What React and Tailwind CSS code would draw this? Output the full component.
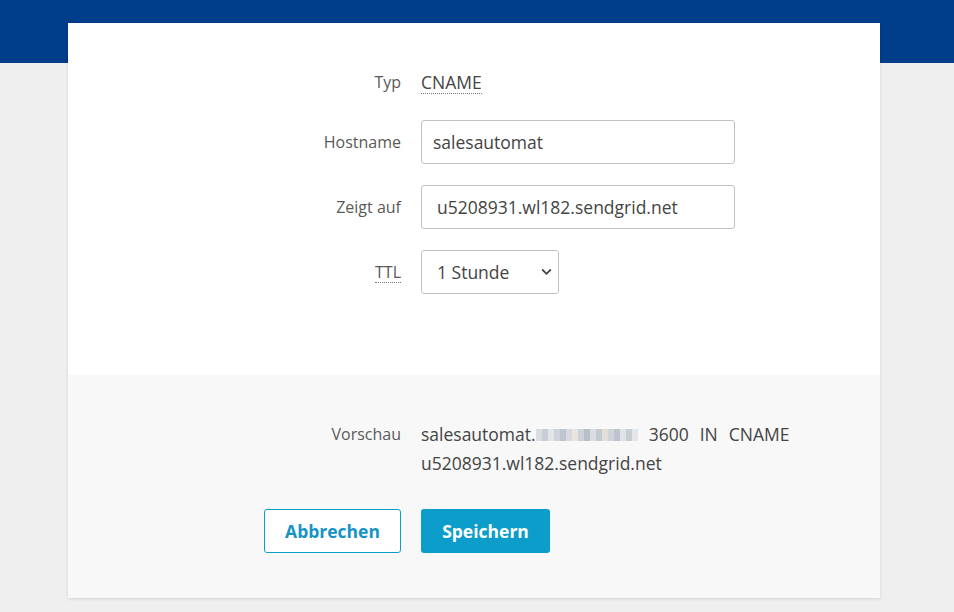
import React from "react";

const font = { fontFamily: '"Open Sans", "Noto Sans", sans-serif' };

function Blur() {
  const cells = [
    "#d9dde3", "#c9ced6", "#e3e5e8", "#cfd3da", "#bfc5ce", "#d6d9de", "#e8e4de", "#cdd2d9",
    "#b9c0ca", "#dadde2", "#c4cad3", "#e2dfd9", "#d0d4da", "#bcc3cc", "#dfe2e6", "#c8cdd5", "#e4e6e9",
  ];
  return (
    <span className="inline-flex h-[12px] w-[102px] items-stretch overflow-hidden blur-[0.6px]">
      {cells.map((c, i) => (
        <span key={i} className="flex-1" style={{ backgroundColor: c }} />
      ))}
    </span>
  );
}

export default function App() {
  return (
    <div className="min-h-[612px] w-full bg-[#efefef]" style={font}>
      <div className="h-[63px] w-full bg-[#003d8b]" />
      <div className="relative -mt-[40px] ml-[68px] w-[812px] bg-white shadow-[0_1px_3px_rgba(0,0,0,0.12)]">
        <div className="grid grid-cols-[333px_314px] gap-x-5 pt-[37px] pb-[81px]">
          <div className="flex h-[44px] items-center justify-end text-[16px] text-[#595959]">Typ</div>
          <div className="flex h-[44px] items-center">
            <span className="border-b border-dotted border-[#777] text-[17.5px] leading-[22px] text-[#444]">CNAME</span>
          </div>

          <div className="mt-[16px] flex h-[44px] items-center justify-end text-[16px] text-[#595959]">Hostname</div>
          <div className="mt-[16px]">
            <input
              readOnly
              value="salesautomat"
              className="h-[44px] w-[314px] rounded-[3px] border border-[#c2c2c2] bg-white px-[11px] text-[17.5px] text-[#444] outline-none"
              style={font}
            />
          </div>

          <div className="mt-[21px] flex h-[44px] items-center justify-end text-[16px] text-[#595959]">Zeigt auf</div>
          <div className="mt-[21px]">
            <input
              readOnly
              value="u5208931.wl182.sendgrid.net"
              className="h-[44px] w-[314px] rounded-[3px] border border-[#c2c2c2] bg-white px-[15px] text-[17.5px] text-[#444] outline-none"
              style={font}
            />
          </div>

          <div className="mt-[21px] flex h-[44px] items-center justify-end">
            <span className="border-b border-dotted border-[#777] text-[16px] leading-[20px] text-[#595959]">TTL</span>
          </div>
          <div className="mt-[21px]">
            <div className="relative h-[44px] w-[138px]">
              <select
                defaultValue="1h"
                className="h-[44px] w-[138px] appearance-none rounded-[3px] border border-[#c2c2c2] bg-white pl-[15px] text-[17.5px] text-[#444] outline-none"
                style={font}
              >
                <option value="1h">1 Stunde</option>
              </select>
              <svg
                className="pointer-events-none absolute right-[7px] top-[18px]"
                width="11"
                height="8"
                viewBox="0 0 11 8"
                fill="none"
                stroke="#444"
                strokeWidth="1.8"
              >
                <path d="M1.2 1.5 L5.5 5.8 L9.8 1.5" />
              </svg>
            </div>
          </div>
        </div>

        <div className="grid grid-cols-[333px_1fr] gap-x-5 bg-[#f8f8f8] pt-[45px] pb-[45px]">
          <div className="text-right text-[16px] leading-[29px] text-[#595959]">Vorschau</div>
          <div className="flex w-[380px] flex-wrap items-center gap-x-[11px] text-[17.5px] leading-[29px] text-[#444]">
            <span className="inline-flex items-center">
              salesautomat.
              <Blur />
            </span>
            <span>3600</span>
            <span>IN</span>
            <span>CNAME</span>
            <span>u5208931.wl182.sendgrid.net</span>
          </div>

          <div className="mt-[31px] flex justify-end">
            <button
              className="h-[44px] w-[137px] rounded-[3px] border border-[#0e9ecc] bg-white text-[17.5px] font-bold text-[#1593c6]"
              style={font}
            >
              Abbrechen
            </button>
          </div>
          <div className="mt-[31px]">
            <button
              className="h-[44px] w-[129px] rounded-[3px] bg-[#0d9dcb] text-[17.5px] font-bold text-white"
              style={font}
            >
              Speichern
            </button>
          </div>
        </div>
      </div>
    </div>
  );
}
